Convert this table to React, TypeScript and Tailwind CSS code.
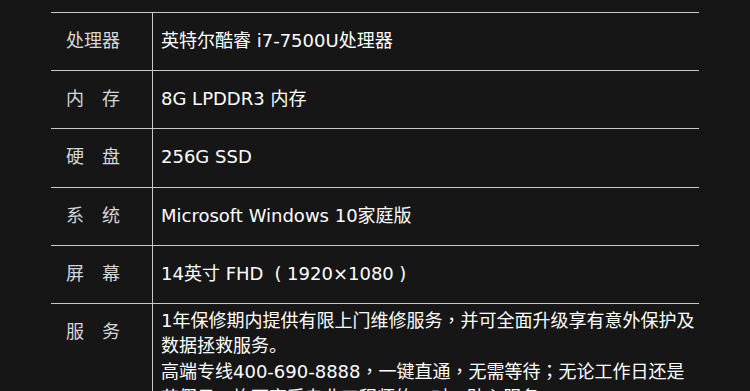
const specs: { label: string; value: string[] }[] = [
  { label: "处理器", value: ["英特尔酷睿 i7-7500U处理器"] },
  { label: "内　存", value: ["8G LPDDR3 内存"] },
  { label: "硬　盘", value: ["256G SSD"] },
  { label: "系　统", value: ["Microsoft Windows 10家庭版"] },
  { label: "屏　幕", value: ["14英寸 FHD （1920×1080）"] },
  {
    label: "服　务",
    value: [
      "1年保修期内提供有限上门维修服务，并可全面升级享有意外保护及数据拯救服务。",
      "高端专线400-690-8888，一键直通，无需等待；无论工作日还是节假日，均可享受专业工程师的一对一贴心服务。",
    ],
  },
];

// full-width punctuation sits centred in its cell
const Punct = ({ text }: { text: string }) => (
  <>
    {text.split(/([，；（）])/).map((part, k) => {
      if (part === "（" || part === "）")
        return (
          <span key={k} className="inline-block w-[18px] text-center">
            {part === "（" ? "(" : ")"}
          </span>
        );
      if (part === "，" || part === "；")
        return (
          <span key={k} className="font-['Noto_Sans_CJK_TC',sans-serif]">
            {part}
          </span>
        );
      return <span key={k}>{part}</span>;
    })}
  </>
);

export default function App() {
  return (
    <div className="h-[391px] w-full overflow-hidden bg-[#161616] font-['DejaVu_Sans','Noto_Sans_CJK_SC',sans-serif]">
      <div className="pt-[12px]">
        <div className="mx-auto w-[648px]">
          {specs.map((row, i) => {
            const multi = row.value.length > 1;
            return (
              <div key={i} className="flex border-t border-[#c9c9c9]">
                <div className="w-[102px] shrink-0 border-r border-[#c9c9c9] pl-[15px] pt-[16px] pb-[17.2px] text-[18px] leading-[24px] text-[#d6d6d6]">
                  {row.label}
                </div>
                <div
                  className={`flex-1 pl-[8px] pr-[2px] text-[18px] text-white ${
                    multi ? "pt-[3px] pb-[6px] leading-[25px]" : "pt-[16px] pb-[17.2px] leading-[24px]"
                  }`}
                >
                  {row.value.map((v, j) => (
                    <p key={j}>
                      <Punct text={v} />
                    </p>
                  ))}
                </div>
              </div>
            );
          })}
        </div>
      </div>
    </div>
  );
}
